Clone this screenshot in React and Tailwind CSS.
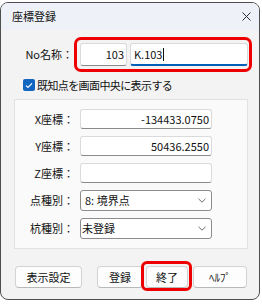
import React from 'react';

const inputBox =
  'h-[20px] w-[132px] bg-white border border-[#dadada] border-b-[#8a8a8a] rounded-[3px] flex items-center';
const selectBox =
  'h-[21px] w-[132px] bg-white border border-[#8c8c8c] rounded-[3px] flex items-center justify-between pr-[4px]';
const btn =
  'h-[22px] bg-[#fdfdfd] border border-[#d3d3d3] border-b-[#b8b8b8] rounded-[4px] flex items-center justify-center text-[11px] text-[#111]';

const Chevron = () => (
  <svg width="8" height="5" viewBox="0 0 8 5" className="mr-[1px]">
    <path d="M0.5 0.8 L4 4.2 L7.5 0.8" stroke="#6b6b6b" strokeWidth="1" fill="none" />
  </svg>
);

const Row = ({ label, children }) => (
  <div className="flex items-center">
    <span className="w-[59px] text-right">{label}</span>
    <div className="ml-[6px]">{children}</div>
  </div>
);

export default function App() {
  return (
    <div className="w-[262px] h-[304px] bg-white overflow-hidden font-['Noto_Sans_CJK_JP','Noto_Sans',sans-serif] text-[11px] leading-none text-[#111]">
      <div className="mt-[2px] w-[260px] h-[298px] border border-[#4f4f4f] rounded-[8px] overflow-hidden flex flex-col bg-[#f3f3f3]">
        {/* title bar */}
        <div className="h-[27px] shrink-0 bg-[#eef2f8] flex items-center justify-between pl-[11px] pr-[8px]">
          <span className="text-[11px]">座標登録</span>
          <svg width="9" height="9" viewBox="0 0 9 9">
            <path d="M0.5 0.5 L8.5 8.5 M8.5 0.5 L0.5 8.5" stroke="#2b2b2b" strokeWidth="1" />
          </svg>
        </div>

        <div className="flex-1 pt-[7px] pl-[13px]">
          {/* No / 名称 */}
          <div className="flex items-center">
            <span className="w-[59px] text-right">No名称：</span>
            <div className="ml-[1px] w-[178px] h-[35px] border-[3px] border-[#ee0000] rounded-[7px] flex items-center pl-[3px] pr-[1px] gap-[3px]">
              <div className="h-[23px] w-[47px] bg-white border border-[#dadada] border-b-[#8a8a8a] rounded-[3px] flex items-center justify-end pr-[2px]">
                103
              </div>
              <div className="h-[23px] flex-1 bg-white border border-[#dadada] border-b-2 border-b-[#005fb8] rounded-[3px] flex items-center pl-[3px]">
                K.103
                <span className="ml-[1px] w-px h-[13px] bg-[#111]" />
              </div>
            </div>
          </div>

          {/* checkbox */}
          <div className="mt-[7px] ml-[9px] h-[12px] flex items-center gap-[2px]">
            <span className="w-[12px] h-[12px] rounded-[2px] bg-[#1265c0] flex items-center justify-center">
              <svg width="8" height="7" viewBox="0 0 8 7">
                <path d="M1 3.6 L3 5.5 L7 1.3" stroke="white" strokeWidth="1.2" fill="none" />
              </svg>
            </span>
            <span className="tracking-[-0.6px]">既知点を画面中央に表示する</span>
          </div>

          {/* group box */}
          <div className="mt-[8px] w-[234px] border border-[#e2e2e2] bg-[#fafafa] pt-[9px] pb-[9px] flex flex-col gap-[7px]">
            <Row label="X座標：">
              <div className={`${inputBox} justify-end pr-[2px]`}>-134433.0750</div>
            </Row>
            <Row label="Y座標：">
              <div className={`${inputBox} justify-end pr-[2px]`}>50436.2550</div>
            </Row>
            <Row label="Z座標：">
              <div className={inputBox} />
            </Row>
            <Row label="点種別：">
              <div className={selectBox}>
                <span className="pl-[4px]">8: 境界点</span>
                <Chevron />
              </div>
            </Row>
            <Row label="杭種別：">
              <div className={selectBox}>
                <span className="pl-[1px]">未登録</span>
                <Chevron />
              </div>
            </Row>
          </div>

          {/* buttons */}
          <div className="mt-[17px] flex items-center">
            <button className={`${btn} ml-[1px] w-[67px]`}>表示設定</button>
            <button className={`${btn} ml-[15px] w-[46px] border-[#0067c0] border-b-[#0067c0]`}>登録</button>
            <span className="relative ml-[3px]">
              <button className={`${btn} w-[42px]`}>終了</button>
              <span className="absolute -left-[5px] -right-[4px] -top-[5px] -bottom-[3px] border-[3px] border-[#ee0000] rounded-[6px] pointer-events-none" />
            </span>
            <button className={`${btn} ml-[5px] w-[54px] text-[10px]`}>ﾍﾙﾌﾟ</button>
          </div>
        </div>
      </div>
    </div>
  );
}
